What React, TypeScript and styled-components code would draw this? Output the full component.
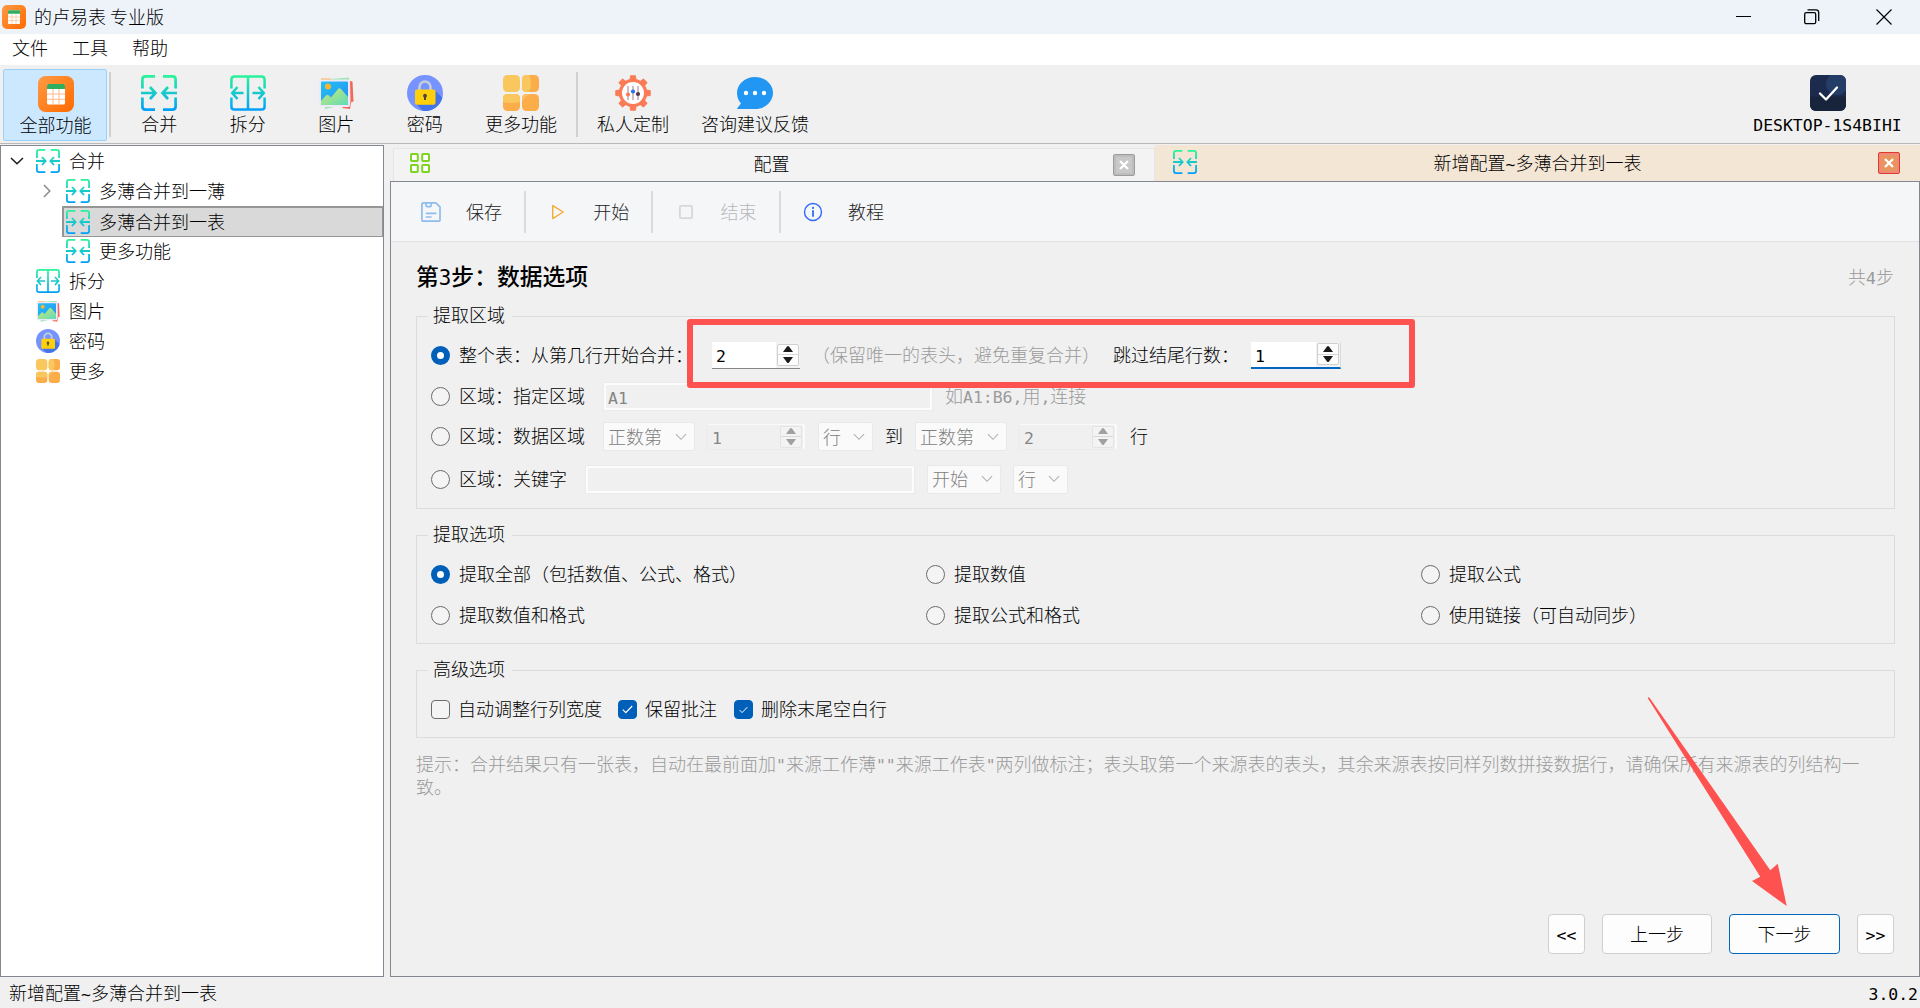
import React, { useId } from 'react';
import styled, { createGlobalStyle, css } from 'styled-components';

const GlobalStyle = createGlobalStyle`
  * { box-sizing: border-box; }
  body {
    margin: 0;
    background: #f0f0f0;
    color: #000;
    font-family: 'Noto Sans CJK SC', 'Liberation Sans', sans-serif;
    font-size: 18px;
    font-weight: 300;
    line-height: 24px;
    text-spacing-trim: space-all;
    overflow: hidden;
  }
  svg { display: block; flex: none; }
`;

/* ---------- text ---------- */

const Latin = styled.span`
  font-family: 'DejaVu Sans Mono', monospace;
  font-size: 0.914em;
  line-height: 1;
`;

const Label = ({ children }: { children: string }) => (
  <span>
    {children.split(/([\x21-\x7e]+)/).map((part, i) =>
      i % 2 ? <Latin key={i}>{part}</Latin> : part,
    )}
  </span>
);

/* ---------- icons ---------- */

type IconProps = { size?: number };

const AppIcon = ({ size = 36 }: IconProps) => {
  const id = useId();
  return (
    <svg width={size} height={size} viewBox="0 0 36 36">
      <defs>
        <linearGradient id={id} x1="0" y1="0" x2="1" y2="1">
          <stop offset="0" stopColor="#ff9a45" />
          <stop offset="1" stopColor="#ff6a00" />
        </linearGradient>
      </defs>
      <rect width="36" height="36" rx="7.5" fill={`url(#${id})`} />
      <rect x="9" y="8" width="18" height="20.5" rx="1.5" fill="#fff" />
      <path d="M9 13V9.500q0-1.500 1.500-1.500h15q1.500 0 1.500 1.500V13z" fill="#2fae5f" />
      <path d="M9 18h18M9 23.300h18M15 13v15.500M21 13v15.500" stroke="#ffb98a" strokeWidth="1" fill="none" />
    </svg>
  );
};

const BracketGradient = ({ id }: { id: string }) => (
  <defs>
    <linearGradient id={id} gradientUnits="userSpaceOnUse" x1="0" y1="0" x2="0" y2="36">
      <stop offset="0" stopColor="#2bf598" />
      <stop offset="1" stopColor="#009efd" />
    </linearGradient>
  </defs>
);

const MergeIcon = ({ size = 36 }: IconProps) => {
  const id = useId();
  return (
    <svg width={size} height={size} viewBox="0 0 36 36">
      <BracketGradient id={id} />
      <path
        d="M14 1.400H4.500Q1.400 1.400 1.400 4.500V13.500M22 1.400h9.500q3.100 0 3.100 3.100V13.500M1.400 22.500v9q0 3.100 3.100 3.100H14M34.600 22.500v9q0 3.100-3.100 3.100H22M0 18h14M9 12l5.500 6L9 24M36 18H22M27 12l-5.500 6 5.500 6"
        fill="none"
        stroke={`url(#${id})`}
        strokeWidth="2.700"
      />
    </svg>
  );
};

const SplitIcon = ({ size = 36 }: IconProps) => {
  const id = useId();
  return (
    <svg width={size} height={size} viewBox="0 0 36 36">
      <BracketGradient id={id} />
      <path
        d="M1.400 13.500V4.500Q1.400 1.400 4.500 1.400h27q3.100 0 3.100 3.100v9M1.400 22.500v9q0 3.100 3.100 3.100h27q3.100 0 3.100-3.100v-9M18 1.400v33.200M2 18h11.500M7.500 12L2.200 18l5.300 6M34 18H22.500M28.500 12l5.300 6-5.300 6"
        fill="none"
        stroke={`url(#${id})`}
        strokeWidth="2.500"
      />
    </svg>
  );
};

const PictureIcon = ({ size = 36 }: IconProps) => {
  const id = useId();
  return (
    <svg width={size} height={size} viewBox="0 0 36 36">
      <defs>
        <linearGradient id={id} x1="0" y1="0" x2="1" y2="1">
          <stop offset="0" stopColor="#1fc3f8" />
          <stop offset="1" stopColor="#2a8cf0" />
        </linearGradient>
        <linearGradient id={`${id}h`} x1="0" y1="0" x2="1" y2="1">
          <stop offset="0" stopColor="#cfe873" />
          <stop offset="1" stopColor="#5fdcb8" />
        </linearGradient>
      </defs>
      <path d="M6 4.500L31 2.500l1 26-25 5.500z" fill="#9be8b4" />
      <path d="M32 6l2.500.5 1 20-3 1z" fill="#f4675a" />
      <path d="M30 28l3-1-1 7-8-1z" fill="#f4675a" />
      <path d="M3 3.500h10v2H3z" fill="#fbb25a" />
      <rect x="1" y="4.500" width="31" height="27.500" rx="2" fill="#efe8f8" />
      <rect x="3" y="6.500" width="27" height="23.500" rx="1" fill={`url(#${id})`} />
      <circle cx="10" cy="11.500" r="3" fill="#fbb52d" />
      <path d="M3 26l5-5.500q1.500-1.500 3 0l2 2 7-8.500q1.500-1.500 3 0l7 8V29q0 1-1 1H4q-1 0-1-1z" fill={`url(#${id}h)`} />
    </svg>
  );
};

const LockIcon = ({ size = 36 }: IconProps) => {
  const id = useId();
  return (
    <svg width={size} height={size} viewBox="0 0 36 36">
      <clipPath id={id}>
        <circle cx="18" cy="18" r="18" />
      </clipPath>
      <circle cx="18" cy="18" r="18" fill="#7793ff" />
      <path d="M27 14.500L40 27 30 40H20L9 29z" fill="#4474e8" clipPath={`url(#${id})`} />
      <path d="M12.500 15.500v-3.500a5.500 5.500 0 0 1 11 0v3.500" fill="none" stroke="#c3cedb" strokeWidth="2.600" />
      <rect x="8" y="14.500" width="20.500" height="15.200" rx="1.800" fill="#ffcf09" />
      <path d="M18 18.800a2 2 0 0 1 1 3.700v2.500h-2v-2.500a2 2 0 0 1 1-3.700z" fill="#4b4642" />
    </svg>
  );
};

const TilesIcon = ({ size = 36 }: IconProps) => (
  <svg width={size} height={size} viewBox="0 0 36 36">
    <rect width="17" height="17" rx="4.500" fill="#f9c75e" />
    <rect x="19" width="17" height="17" rx="4.500" fill="#fbad4a" />
    <path d="M23.500 0H26q4 8 0 17h-2.500Q19 17 19 12.500v-8Q19 0 23.500 0z" fill="#f9c75e" />
    <rect y="19" width="17" height="17" rx="4.500" fill="#fbad4a" />
    <path d="M0 27v-3.500Q0 19 4.500 19h8q4.500 0 4.500 4.500V27q-8 2-17 0z" fill="#f9c75e" />
    <rect x="19" y="19" width="17" height="17" rx="4.500" fill="#fbad4a" />
    <path d="M19 27v-3.500Q19 19 23.500 19H28q-7 2-9 8z" fill="#f9c065" />
  </svg>
);

const GearIcon = () => (
  <svg width="36" height="36" viewBox="0 0 36 36">
    {[0, 45, 90, 135, 180, 225, 270, 315].map((angle) => (
      <path key={angle} d="M15.500.8h5l.5 5h-6z" fill="#fa7b55" stroke="#fa7b55" strokeWidth="1" strokeLinejoin="round" transform={`rotate(${angle} 18 18)`} />
    ))}
    <circle cx="18" cy="18" r="14.200" fill="#fa7b55" />
    <circle cx="18" cy="18" r="11" fill="#fff" />
    <path d="M13 11v14M18 11v14M23 11v14" stroke="#cdb4bf" strokeWidth="1.800" />
    <circle cx="13" cy="19.500" r="2.100" fill="#fa7b55" />
    <circle cx="18" cy="16.500" r="2.100" fill="#2473f2" />
    <circle cx="23" cy="19" r="2.100" fill="#55343f" />
  </svg>
);

const ChatIcon = () => (
  <svg width="36" height="36" viewBox="0 0 36 36">
    <path d="M18 2c10 0 18 7 18 15.700S28.500 34 18 34H.6q-.8-.6 0-1.300L4 28.500C1.500 25.500 0 22 0 18 0 9 8 2 18 2z" fill="#2196f3" />
    <circle cx="9" cy="18" r="2.200" fill="#fff" />
    <circle cx="18" cy="18" r="2.200" fill="#fff" />
    <circle cx="27" cy="18" r="2.200" fill="#fff" />
  </svg>
);

const DeviceIcon = () => {
  const id = useId();
  return (
    <svg width="36" height="36" viewBox="0 0 36 36">
      <clipPath id={id}>
        <rect width="36" height="36" rx="6" />
      </clipPath>
      <g clipPath={`url(#${id})`}>
        <rect width="36" height="36" fill="#1c2b4d" />
        <circle cx="27" cy="9" r="11" fill="#233d66" />
        <rect y="21.500" width="36" height="15" fill="#18243b" />
      </g>
      <path d="M10 18.500l6 6L27 12.500" fill="none" stroke="#fff" strokeWidth="2.300" strokeLinecap="round" strokeLinejoin="round" />
    </svg>
  );
};

const GridIcon = () => (
  <svg width="20" height="20" viewBox="0 0 20 20">
    <g fill="#fff" stroke="#7fd321" strokeWidth="2">
      <rect x="1" y="1" width="6.800" height="7" rx="0.800" />
      <rect x="12.200" y="1" width="6.800" height="7" rx="0.800" />
      <rect x="1" y="12" width="6.800" height="7" rx="0.800" />
      <rect x="12.200" y="12" width="6.800" height="7" rx="0.800" />
    </g>
  </svg>
);

const SaveIcon = () => (
  <svg width="20" height="20" viewBox="0 0 20 20" fill="none" stroke="#8fbcee" strokeWidth="1.700">
    <path d="M2.500.9h12.300L19 4.800v13.200q0 1.200-1.200 1.200H2.200Q.9 19.200.9 18V2.200Q.9.9 2.500.9z" />
    <path d="M5 1v2.200Q5 4.700 6.500 4.700h2.200q1.500 0 1.500-1.500V1M4.800 11.300h10.700M4.800 15h5.800" />
  </svg>
);

const PlayIcon = () => (
  <svg width="20" height="20" viewBox="0 0 20 20">
    <path d="M4.700 3.600v13L15.200 10z" fill="none" stroke="#f5ab35" strokeWidth="1.400" strokeLinejoin="round" />
  </svg>
);

const StopIcon = () => (
  <svg width="20" height="20" viewBox="0 0 20 20">
    <rect x="3.900" y="3.900" width="12.200" height="12.200" rx="1" fill="none" stroke="#d6d7d9" strokeWidth="1.800" />
  </svg>
);

const InfoIcon = () => (
  <svg width="20" height="20" viewBox="0 0 20 20">
    <circle cx="10" cy="10" r="8.500" fill="none" stroke="#2f6bff" strokeWidth="1.400" />
    <path d="M10 8.300v6.500" stroke="#2f6bff" strokeWidth="1.800" />
    <circle cx="10" cy="5.900" r="1.100" fill="#2f6bff" />
  </svg>
);

const Chevron = () => (
  <svg width="12" height="8" viewBox="0 0 12 8">
    <path d="M.9 1.200L6 6.300l5.100-5.100" fill="none" stroke="#b0b0b0" strokeWidth="1.100" />
  </svg>
);

const CheckMark = ({ small }: { small?: boolean }) => (
  <svg width={small ? 9 : 11} height={small ? 8 : 9} viewBox="0 0 11 9">
    <path d="M.8 4.700L3.800 7.700 10.200 1" fill="none" stroke="#fff" strokeWidth="1.200" />
  </svg>
);

/* ---------- window frame ---------- */

const Window = styled.div`
  position: relative;
  display: flex;
  flex-direction: column;
  width: 1920px;
  height: 1008px;
  overflow: hidden;
  white-space: nowrap;
`;

const TitleBar = styled.header`
  display: flex;
  align-items: center;
  height: 34px;
  flex: none;
  padding-left: 2px;
  gap: 8px;
  background: #eef3fa;
`;

const AppTitle = styled.span`
  padding-bottom: 2px;
`;

const WindowControls = styled.div`
  display: flex;
  margin-left: auto;
`;

const WindowControl = styled.div<{ $width: number }>`
  display: flex;
  align-items: center;
  justify-content: center;
  width: ${(p) => p.$width}px;
`;

const MenuBar = styled.nav`
  display: flex;
  gap: 24px;
  height: 31px;
  flex: none;
  padding: 1px 0 0 12px;
  background: #fff;
`;

const Toolbar = styled.div`
  display: flex;
  height: 78px;
  flex: none;
  padding: 4px 0 0 3px;
`;

const ToolbarRule = styled.div<{ $left?: number; $right?: number }>`
  width: 2px;
  height: 65px;
  margin: 3px ${(p) => p.$right ?? 0}px 0 ${(p) => p.$left ?? 0}px;
  background: #d0d0d0;
`;

const ToolButton = styled.div<{ $width: number; $active?: boolean }>`
  display: flex;
  flex-direction: column;
  align-items: center;
  width: ${(p) => p.$width}px;
  height: 72px;
  padding: 6px 0 0;
  border-radius: 2px;
  line-height: 25px;
  ${(p) =>
    p.$active &&
    css`
      padding-left: 1px;
      background: #cce8ff;
      border: 1px solid #99d1ff;
    `}
`;

const Machine = styled(ToolButton)`
  margin-left: auto;
  margin-right: 18px;
`;

const Workspace = styled.main`
  display: flex;
  flex: none;
  height: 834px;
  padding-top: 1px;
  border-top: 1px solid #b8b8b8;
`;

/* ---------- tree ---------- */

const Tree = styled.aside`
  width: 384px;
  flex: none;
  background: #fff;
  border: 1px solid #828790;
`;

const TreeRow = styled.div<{ $level: number; $selected?: boolean }>`
  display: flex;
  align-items: center;
  height: 30px;
  padding-left: ${(p) => (p.$level ? 65 : 35)}px;
  ${(p) =>
    p.$selected &&
    css`
      height: 31px;
      margin: 0 0 -1px 61px;
      padding: 0 0 1px 2px;
      background: #d9d9d9;
      border: solid #969696;
      border-width: 2px 1px 1px 2px;
    `}
`;

const TreeText = styled.span`
  margin-left: 9px;
  padding-bottom: 2px;
`;

const Twisty = styled.span`
  display: flex;
  justify-content: center;
  width: 20px;
  margin: 0 9px 0 -29px;
`;

/* ---------- tabs ---------- */

const Content = styled.section`
  display: flex;
  flex-direction: column;
  flex: 1;
  min-width: 0;
  margin-left: 6px;
`;

const Tabs = styled.div`
  display: flex;
  align-items: flex-end;
  height: 36px;
  flex: none;
  padding-left: 3px;
`;

const Tab = styled.div<{ $active?: boolean }>`
  display: flex;
  align-items: center;
  height: ${(p) => (p.$active ? 36 : 33)}px;
  background: #f3f3f3;
  border: solid #e5e5e5;
  border-width: 1px 1px 0;
  width: 762px;
  padding: 0 19px 4px 16px;
  ${(p) =>
    p.$active &&
    css`
      width: 765px;
      padding: 0 20px 3px 18px;
      background: #f3e6d5;
      border: 0;
    `}
`;

const TabTitle = styled.span`
  flex: 1;
  text-align: center;
`;

const CloseBox = styled.span<{ $active?: boolean }>`
  display: flex;
  align-items: center;
  justify-content: center;
  width: 22px;
  height: 22px;
  margin-top: 3px;
  border-radius: 2px;
  border: 1px solid ${(p) => (p.$active ? '#e03a30' : '#9c9c9c')};
  box-shadow: inset 0 0 0 2px ${(p) => (p.$active ? '#f08a78' : '#bdbdbd')};
  background: ${(p) => (p.$active ? '#e9955f' : '#c8c8c8')};
`;

const CloseMark = () => (
  <svg width="10" height="10" viewBox="0 0 10 10">
    <path d="M1 1l8 8M9 1L1 9" stroke="#fff" strokeWidth="2.300" />
  </svg>
);

/* ---------- page ---------- */

const Page = styled.div`
  display: flex;
  flex-direction: column;
  flex: 1;
  border: 1px solid #828790;
`;

const ActionBar = styled.div`
  display: flex;
  align-items: center;
  height: 60px;
  flex: none;
  padding: 0 0 0 30px;
  background: #f5f6f8;
  border-bottom: 1px solid #e0e0e0;
`;

const Action = styled.div<{ $disabled?: boolean }>`
  display: flex;
  align-items: center;
  gap: 25px;
  color: ${(p) => (p.$disabled ? '#b6b8bb' : '#222')};
`;

const ActionText = styled.span`
  padding-bottom: 2px;
`;

const ActionRule = styled.div`
  width: 2px;
  height: 42px;
  margin: 0 22.3px 0 22px;
  background: #dadbdd;
`;

const Body = styled.div`
  display: flex;
  flex-direction: column;
  flex: 1;
  padding: 19px 24px 0 25px;
`;

const StepHeader = styled.div`
  display: flex;
  justify-content: space-between;
  align-items: center;
  height: 30px;
  padding-right: 1px;
  color: #999;
`;

const StepTitle = styled.h1`
  margin: 0;
  color: #000;
  font-size: 22.8px;
  font-weight: 500;
`;

const Group = styled.fieldset<{ $height: number; $top: number }>`
  min-width: 0;
  height: ${(p) => p.$height}px;
  margin: ${(p) => p.$top}px 0 0;
  padding: 0 0 0 14px;
  border: 1px solid #dcdcdc;
`;

const Legend = styled.legend`
  height: 24px;
  margin-left: -3px;
  padding: 0 7px 0 5px;
  line-height: 20px;
`;

const FormRow = styled.div<{ $height?: number }>`
  display: flex;
  align-items: center;
  height: ${(p) => p.$height ?? 41}px;
`;

const FirstRow = styled(FormRow)`
  margin-top: -1px;
`;

const Radio = styled.span<{ $checked?: boolean }>`
  flex: none;
  width: 19px;
  height: 19px;
  margin-right: 9px;
  border: ${(p) => (p.$checked ? '6px solid #005fb8' : '1px solid #6c6c6c')};
  border-radius: 50%;
  background: ${(p) => (p.$checked ? '#fff' : '#f4f4f4')};
`;

const Check = styled.span<{ $checked?: boolean; $left?: number }>`
  display: flex;
  align-items: center;
  justify-content: center;
  flex: none;
  width: 19px;
  height: 19px;
  margin: 0 8px 0 ${(p) => p.$left ?? 0}px;
  border: 1px solid ${(p) => (p.$checked ? '#005fb8' : '#6c6c6c')};
  border-radius: 4px;
  background: ${(p) => (p.$checked ? '#005fb8' : '#f4f4f4')};
`;

const Text = styled.span<{ $left?: number; $width?: number; $muted?: boolean }>`
  flex: none;
  margin-left: ${(p) => p.$left ?? 0}px;
  padding-bottom: 3px;
  width: ${(p) => (p.$width ? `${p.$width}px` : 'auto')};
  color: ${(p) => (p.$muted ? '#9b9b9b' : 'inherit')};
`;

const Input = styled.div<{ $width: number; $left: number }>`
  width: ${(p) => p.$width}px;
  height: 27px;
  margin-left: ${(p) => p.$left}px;
  padding-left: 2px;
  line-height: 22px;
  color: #858585;
  border: 2px solid #fcfcfc;
  box-shadow: 0 0 0 1px #ebebeb;
`;

const Select = styled.div<{ $width: number; $left: number }>`
  display: flex;
  align-items: center;
  justify-content: space-between;
  width: ${(p) => p.$width}px;
  height: 29px;
  margin-left: ${(p) => p.$left}px;
  padding: 0 7px 0 4px;
  line-height: 26px;
  color: #808080;
  background: #fafafa;
  border: 1px solid #e9e9e9;
  border-radius: 2px;
`;

const SelectText = styled.span`
  padding-bottom: 2px;
`;

const SpinBox = styled.div<{ $width: number; $left: number; $state: 'normal' | 'focus' | 'disabled' }>`
  display: flex;
  align-items: center;
  justify-content: space-between;
  width: ${(p) => p.$width}px;
  height: 27px;
  margin-left: ${(p) => p.$left}px;
  padding: 0 1px 0 4px;
  line-height: 22px;
  color: #000;
  background: linear-gradient(90deg, #fff calc(100% - 24px), #f2f2f2 0);
  border-bottom: 1px solid #868686;
  ${(p) =>
    p.$state === 'focus' &&
    css`
      border-bottom: 2px solid #0067c0;
      border-right: 1px solid #d5dce4;
    `}
  ${(p) =>
    p.$state === 'disabled' &&
    css`
      height: 26px;
      color: #858585;
      background: #f0f0f0;
      border: 1px solid #ebebeb;
      border-width: 1px 2px 1px 1px;
      border-top-color: #fafafa;
      border-right-color: #fafafa;
    `}
`;

const Stepper = styled.span<{ $disabled?: boolean }>`
  display: flex;
  flex-direction: column;
  width: 22px;
  height: 22px;
  color: ${(p) => (p.$disabled ? '#a0a0a0' : '#1a1a1a')};
  background: ${(p) => (p.$disabled ? '#f3f3f3' : '#fcfcfc')};
  border: 1px solid ${(p) => (p.$disabled ? '#e4e4e4' : '#cfcfcf')};
  border-radius: 2px;
`;

const StepHalf = styled.span`
  display: flex;
  flex: 1;
  align-items: center;
  justify-content: center;
  & + & { border-top: 1px solid #d8d8d8; }
`;

const Spin = ({ value, width, left, state = 'normal' }: { value: string; width: number; left: number; state?: 'normal' | 'focus' | 'disabled' }) => (
  <SpinBox $width={width} $left={left} $state={state}>
    <Label>{value}</Label>
    <Stepper $disabled={state === 'disabled'}>
      <StepHalf>
        <svg width="10" height="6" viewBox="0 0 10 6"><path d="M0 6L4 .5q1-1 2 0L10 6z" fill="currentColor" /></svg>
      </StepHalf>
      <StepHalf>
        <svg width="10" height="6" viewBox="0 0 10 6"><path d="M0 0l4 5.500q1 1 2 0L10 0z" fill="currentColor" /></svg>
      </StepHalf>
    </Stepper>
  </SpinBox>
);

const Dropdown = ({ value, width, left }: { value: string; width: number; left: number }) => (
  <Select $width={width} $left={left}>
    <SelectText>{value}</SelectText>
    <Chevron />
  </Select>
);

const RadioGrid = styled.div`
  display: grid;
  grid-template-columns: 495px 495px 1fr;
  grid-auto-rows: 41px;
  padding-top: 7px;
`;

const Hint = styled.p`
  margin: 14px 0 0;
  color: #9b9b9b;
  line-height: 23px;
`;

const Pager = styled.div`
  display: flex;
  justify-content: flex-end;
  gap: 17px;
  margin-top: auto;
  padding: 0 1px 22px 0;
`;

const PagerButton = styled.button<{ $width: number; $primary?: boolean }>`
  width: ${(p) => p.$width}px;
  height: 40px;
  padding: 0 0 3px;
  font: inherit;
  color: #000;
  background: #fdfdfd;
  border: 1px solid ${(p) => (p.$primary ? '#0067c0' : '#cfcfcf')};
  border-radius: 4px;
`;

const StatusBar = styled.footer`
  display: flex;
  justify-content: space-between;
  align-items: center;
  height: 31px;
  padding: 0 2px 2px 9px;
`;

/* ---------- annotations drawn over the window ---------- */

const Highlight = styled.div`
  position: absolute;
  left: 687px;
  top: 319px;
  width: 728px;
  height: 69px;
  border: 6px solid #fe5250;
  border-radius: 3px;
`;

const Arrow = styled.svg`
  position: absolute;
  left: 1640px;
  top: 690px;
`;

/* ---------- data ---------- */

const tools = [
  { label: '合并', icon: <MergeIcon />, width: 88.5 },
  { label: '拆分', icon: <SplitIcon />, width: 88.5 },
  { label: '图片', icon: <PictureIcon />, width: 88.5 },
  { label: '密码', icon: <LockIcon />, width: 88.5 },
  { label: '更多功能', icon: <TilesIcon />, width: 104 },
];

const rootItems = [
  { label: '拆分', icon: <SplitIcon size={24} /> },
  { label: '图片', icon: <PictureIcon size={24} /> },
  { label: '密码', icon: <LockIcon size={24} /> },
  { label: '更多', icon: <TilesIcon size={24} /> },
];

const extractOptions = [
  '提取全部（包括数值、公式、格式）',
  '提取数值',
  '提取公式',
  '提取数值和格式',
  '提取公式和格式',
  '使用链接（可自动同步）',
];

export default function App() {
  return (
    <Window>
      <GlobalStyle />
      <TitleBar>
        <AppIcon size={24} />
        <AppTitle>的卢易表 专业版</AppTitle>
        <WindowControls>
          <WindowControl $width={68}>
            <svg width="16" height="16" viewBox="0 0 16 16"><path d="M1 7.500h15" stroke="#000" /></svg>
          </WindowControl>
          <WindowControl $width={70}>
            <svg width="16" height="16" viewBox="0 0 16 16" fill="none" stroke="#000" strokeWidth="1.300">
              <rect x=".7" y="3.700" width="11" height="11" rx="1.500" />
              <path d="M3.500.8H12q2.700 0 2.700 2.700V12" />
            </svg>
          </WindowControl>
          <WindowControl $width={73}>
            <svg width="16" height="16" viewBox="0 0 16 16"><path d="M.5.500l15 15M15.500.500l-15 15" stroke="#000" strokeWidth="1.200" /></svg>
          </WindowControl>
        </WindowControls>
      </TitleBar>
      <MenuBar>
        <span>文件</span>
        <span>工具</span>
        <span>帮助</span>
      </MenuBar>
      <Toolbar>
        <ToolButton $width={104} $active>
          <AppIcon />
          全部功能
        </ToolButton>
        <ToolbarRule $left={2} $right={4} />
        {tools.map((tool) => (
          <ToolButton key={tool.label} $width={tool.width}>
            {tool.icon}
            {tool.label}
          </ToolButton>
        ))}
        <ToolbarRule $left={3} $right={3} />
        <ToolButton $width={104}>
          <GearIcon />
          私人定制
        </ToolButton>
        <ToolButton $width={140}>
          <ChatIcon />
          咨询建议反馈
        </ToolButton>
        <Machine $width={149}>
          <DeviceIcon />
          <Label>DESKTOP-1S4BIHI</Label>
        </Machine>
      </Toolbar>

      <Workspace>
        <Tree>
          <TreeRow $level={0}>
            <Twisty>
              <svg width="14" height="8" viewBox="0 0 14 8"><path d="M1 1l6 5.800L13 1" fill="none" stroke="#1a1a1a" strokeWidth="1.500" /></svg>
            </Twisty>
            <MergeIcon size={24} />
            <TreeText>合并</TreeText>
          </TreeRow>
          <TreeRow $level={1}>
            <Twisty>
              <svg width="8" height="14" viewBox="0 0 8 14"><path d="M1 1l5.800 6L1 13" fill="none" stroke="#8a8a8a" strokeWidth="1.500" /></svg>
            </Twisty>
            <MergeIcon size={24} />
            <TreeText>多薄合并到一薄</TreeText>
          </TreeRow>
          <TreeRow $level={1} $selected>
            <MergeIcon size={24} />
            <TreeText>多薄合并到一表</TreeText>
          </TreeRow>
          <TreeRow $level={1}>
            <MergeIcon size={24} />
            <TreeText>更多功能</TreeText>
          </TreeRow>
          {rootItems.map((item) => (
            <TreeRow key={item.label} $level={0}>
              {item.icon}
              <TreeText>{item.label}</TreeText>
            </TreeRow>
          ))}
        </Tree>

        <Content>
          <Tabs>
            <Tab>
              <GridIcon />
              <TabTitle>配置</TabTitle>
              <CloseBox><CloseMark /></CloseBox>
            </Tab>
            <Tab $active>
              <MergeIcon size={24} />
              <TabTitle><Label>新增配置~多薄合并到一表</Label></TabTitle>
              <CloseBox $active><CloseMark /></CloseBox>
            </Tab>
          </Tabs>
          <Page>
            <ActionBar>
              <Action><SaveIcon /><ActionText>保存</ActionText></Action>
              <ActionRule />
              <Action><PlayIcon /><ActionText>开始</ActionText></Action>
              <ActionRule />
              <Action $disabled><StopIcon /><ActionText>结束</ActionText></Action>
              <ActionRule />
              <Action><InfoIcon /><ActionText>教程</ActionText></Action>
            </ActionBar>
            <Body>
              <StepHeader>
                <StepTitle><Label>第3步：数据选项</Label></StepTitle>
                <Label>共4步</Label>
              </StepHeader>

              <Group $height={205} $top={13}>
                <Legend>提取区域</Legend>
                <FirstRow $height={56}>
                  <Radio $checked />
                  <Text $width={234}>整个表：从第几行开始合并：</Text>
                  <Spin value="2" width={88} left={19} />
                  <Text $muted $left={12}>（保留唯一的表头，避免重复合并）</Text>
                  <Text $left={13}>跳过结尾行数：</Text>
                  <Spin value="1" width={90} left={12} state="focus" />
                </FirstRow>
                <FormRow $height={26}>
                  <Radio />
                  <Text $width={126}>区域：指定区域</Text>
                  <Input $width={328} $left={19}><Label>A1</Label></Input>
                  <Text $muted $left={13}><Label>如A1:B6,用,连接</Label></Text>
                </FormRow>
                <FormRow $height={55}>
                  <Radio />
                  <Text $width={126}>区域：数据区域</Text>
                  <Dropdown value="正数第" width={92} left={18} />
                  <Spin value="1" width={98} left={12} state="disabled" />
                  <Dropdown value="行" width={55} left={13} />
                  <Text $left={12}>到</Text>
                  <Dropdown value="正数第" width={92} left={12} />
                  <Spin value="2" width={98} left={12} state="disabled" />
                  <Text $left={13}>行</Text>
                </FormRow>
                <FormRow $height={30}>
                  <Radio />
                  <Text $width={108}>区域：关键字</Text>
                  <Input $width={328} $left={19} />
                  <Dropdown value="开始" width={74} left={13} />
                  <Dropdown value="行" width={55} left={12} />
                </FormRow>
              </Group>

              <Group $height={121} $top={14}>
                <Legend>提取选项</Legend>
                <RadioGrid>
                  {extractOptions.map((option, i) => (
                    <FormRow key={option}>
                      <Radio $checked={i === 0} />
                      <Text>{option}</Text>
                    </FormRow>
                  ))}
                </RadioGrid>
              </Group>

              <Group $height={80} $top={14}>
                <Legend>高级选项</Legend>
                <FormRow $height={55}>
                  <Check />
                  <Text>自动调整行列宽度</Text>
                  <Check $checked $left={16}><CheckMark /></Check>
                  <Text>保留批注</Text>
                  <Check $checked $left={17}><CheckMark small /></Check>
                  <Text>删除末尾空白行</Text>
                </FormRow>
              </Group>

              <Hint>
                <Label>提示：合并结果只有一张表，自动在最前面加"来源工作薄""来源工作表"两列做标注；表头取第一个来源表的表头，其余来源表按同样列数拼接数据行，请确保所有来源表的列结构一</Label>
                <br />
                致。
              </Hint>

              <Pager>
                <PagerButton $width={37}><Label>{'<<'}</Label></PagerButton>
                <PagerButton $width={110}>上一步</PagerButton>
                <PagerButton $width={111} $primary>下一步</PagerButton>
                <PagerButton $width={37}><Label>{'>>'}</Label></PagerButton>
              </Pager>
            </Body>
          </Page>
        </Content>
      </Workspace>

      <StatusBar>
        <Label>新增配置~多薄合并到一表</Label>
        <Label>3.0.2</Label>
      </StatusBar>

      <Highlight />
      <Arrow width="150" height="220" viewBox="1640 690 150 220">
        <path d="M1647.700 698q.7-1.500 2 0L1770.300 870.300l7.400-6.600 9 42.300-34.700-25 8.300-4.300z" fill="#fe5250" />
      </Arrow>
    </Window>
  );
}
